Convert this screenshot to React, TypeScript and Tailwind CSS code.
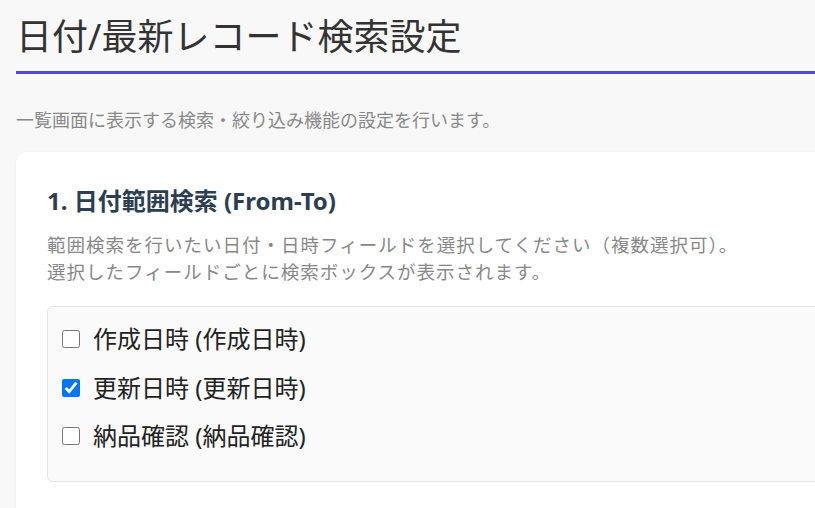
import { useState } from "react";

type DateField = {
	code: string;
	label: string;
};

const fields: DateField[] = [
	{ code: "created", label: "作成日時" },
	{ code: "updated", label: "更新日時" },
	{ code: "delivery", label: "納品確認" },
];

export default function App() {
	const [selected, setSelected] = useState<string[]>(["updated"]);

	const toggle = (code: string) => {
		setSelected(prev => prev.includes(code) ? prev.filter(c => c !== code) : [...prev, code]);
	};

	return (
		<div className="w-[815px] h-[508px] overflow-hidden bg-[#f8f8f8] font-['Noto_Sans','Noto_Sans_CJK_JP',sans-serif]">
			<div className="w-[1000px] px-4 pt-[15px]">
				<h1 className="text-[36px] leading-[43px] font-normal text-[#333] pb-[13px] border-b-[3px] border-[#4f46e5]">
					日付/最新レコード検索設定
				</h1>
				<p className="mt-[32px] text-[18px] leading-[28px] text-[#888]">
					一覧画面に表示する検索・絞り込み機能の設定を行います。
				</p>
				<section className="mt-[18px] bg-white rounded-xl shadow-[0_1px_4px_rgba(0,0,0,0.05)] pt-[33px] px-[31px] pb-[40px]">
					<h2 className="text-[24px] leading-[32px] font-bold text-[#2c3e50]">
						1. 日付範囲検索 (From-To)
					</h2>
					<p className="mt-[14px] text-[18.5px] leading-[27px] tracking-[1px] text-[#888]">
						範囲検索を行いたい日付・日時フィールドを選択してください（複数選択可）。<br />
						選択したフィールドごとに検索ボックスが表示されます。
					</p>
					<div className="mt-[21px] bg-[#fafafa] border border-[#e5e5e5] rounded-md pt-[15px] pb-[13px] pl-[14px]">
						{fields.map(f => (
							<label key={f.code} className="flex items-center gap-[13px] h-[34px] mb-[14.5px] text-[24px] text-[#222] cursor-pointer">
								<input
									type="checkbox"
									checked={selected.includes(f.code)}
									onChange={() => toggle(f.code)}
									className="w-[18px] h-[18px] m-0"
								/>
								<span>{f.label} ({f.label})</span>
							</label>
						))}
					</div>
				</section>
			</div>
		</div>
	);
}
